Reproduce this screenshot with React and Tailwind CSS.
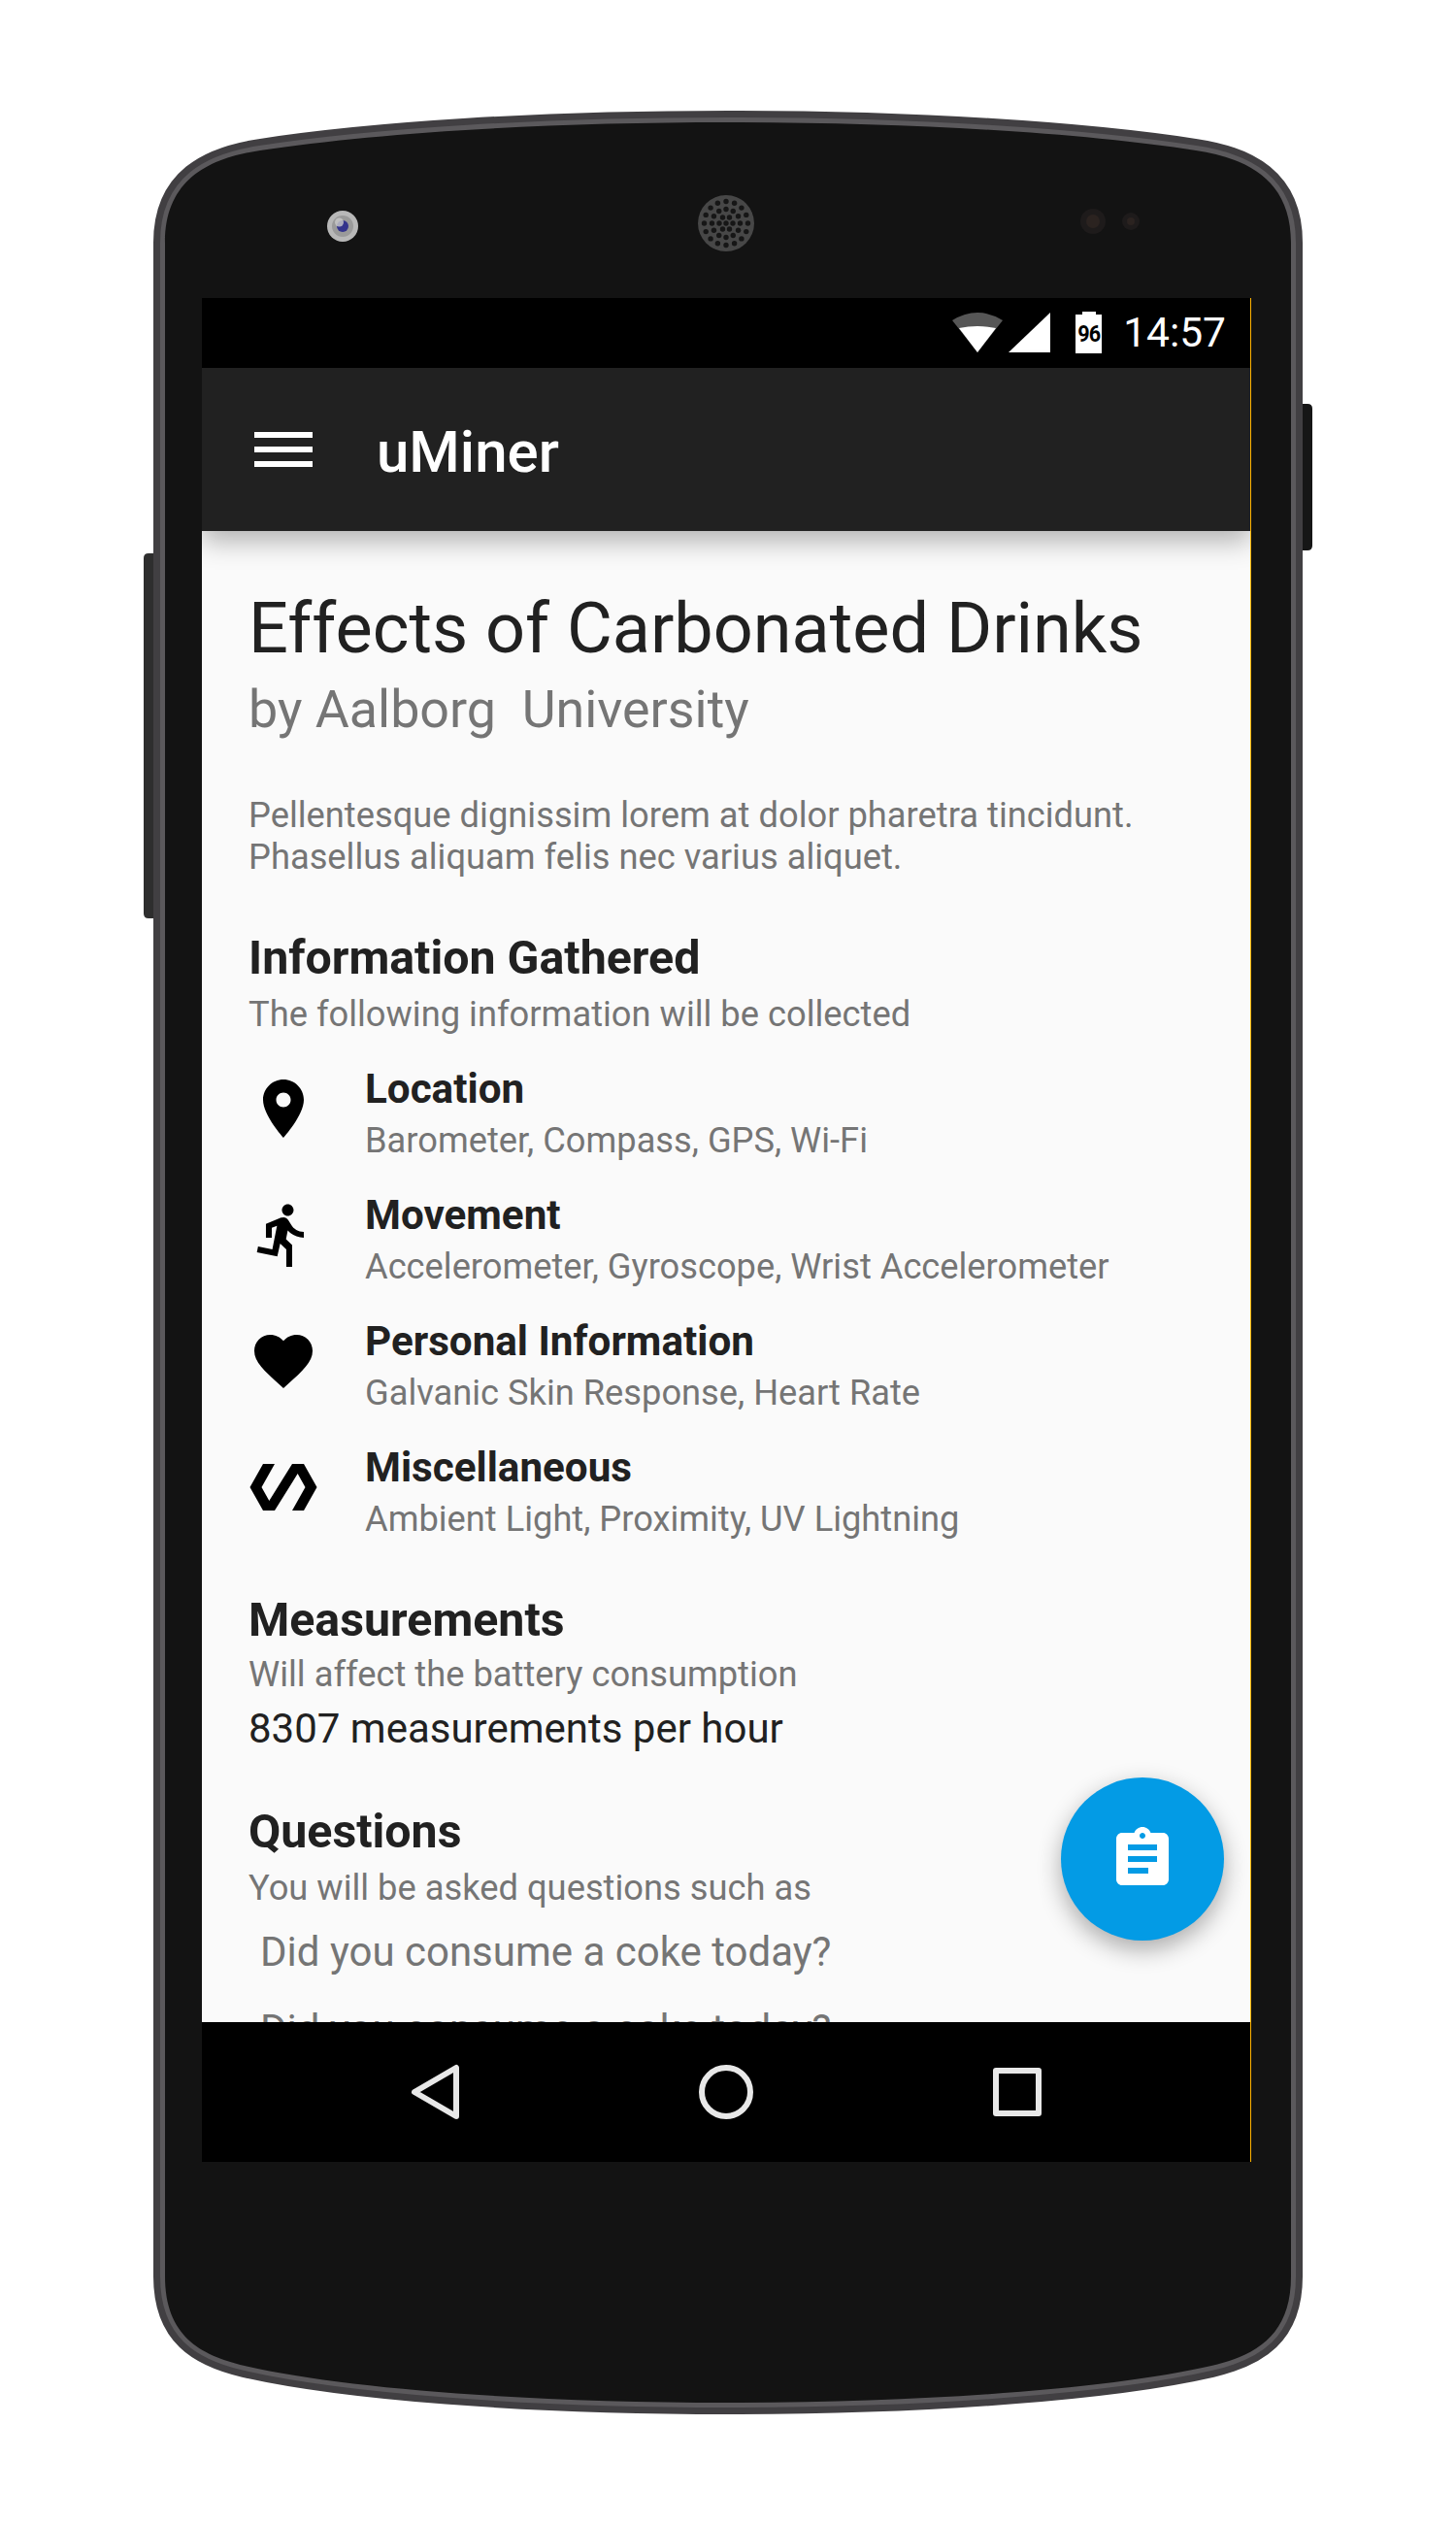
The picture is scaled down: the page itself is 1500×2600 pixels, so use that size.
import React from "react";

const BODY =
  "M750 126 C560 126 385 137 268 155 C215 163 170 185 170 250 L170 2345 C170 2405 205 2426 252 2437 C352 2460 540 2475 750 2475 C960 2475 1148 2460 1248 2437 C1295 2426 1330 2405 1330 2345 L1330 250 C1330 185 1285 163 1232 155 C1115 137 940 126 750 126 Z";

function Speaker() {
  const rings = [
    [0, 1, 0],
    [7, 6, 0],
    [14.5, 12, 0],
    [22.5, 16, 0],
  ];
  const dots = [];
  rings.forEach(([r, n, off]) => {
    for (let i = 0; i < n; i++) {
      const a = ((i * 360) / n + off) * (Math.PI / 180);
      dots.push(<circle key={`${r}-${i}`} cx={748 + r * Math.cos(a)} cy={230 + r * Math.sin(a)} r="2.7" fill="#161616" />);
    }
  });
  return (
    <g>
      <circle cx="748" cy="230" r="29" fill="#474747" />
      {dots}
    </g>
  );
}

function PhoneBody() {
  return (
    <svg className="absolute inset-0" width="1500" height="2600" viewBox="0 0 1500 2600">
      <path d="M158 570 H153 Q148 570 148 575 V941 Q148 946 153 946 H158 Z" fill="#2e2e2e" />
      <path d="M1342 416 H1347 Q1352 416 1352 421 V562 Q1352 567 1347 567 H1342 Z" fill="#161616" />
      <path d={BODY} fill="none" stroke="#413f42" strokeWidth="24" />
      <path d={BODY} fill="none" stroke="#5b595c" strokeWidth="10" />
      <path d={BODY} fill="#131313" />
      <circle cx="353" cy="233" r="16" fill="#b8b8b8" />
      <circle cx="353" cy="233" r="11" fill="#9a9a9a" />
      <circle cx="353" cy="233" r="6" fill="#33338c" />
      <circle cx="349.5" cy="229" r="4.5" fill="#c9c9c9" opacity="0.8" />
      <Speaker />
      <circle cx="1126" cy="228" r="13" fill="#1e1b1b" />
      <circle cx="1126" cy="228" r="7" fill="#2b2320" />
      <circle cx="1165" cy="228" r="9" fill="#1e1b1b" />
      <circle cx="1165" cy="228" r="4" fill="#2b2320" />
    </svg>
  );
}

function StatusBar() {
  return (
    <div className="h-[72px] bg-black flex items-start justify-end shrink-0 pr-[25px] text-white">
      <svg width="60" height="48" viewBox="0 0 60 48" className="mt-[13px]">
        <path d="M3 10 Q29 -6 55 10 L29 43 Z" fill="#565656" />
        <path d="M10 18 Q29 14 48 18 L29 43 Z" fill="#fff" />
      </svg>
      <svg width="44" height="42" viewBox="0 0 44 42" className="mt-[15px] ml-[1px]">
        <path d="M0 41 L43 0 V41 Z" fill="#fff" />
      </svg>
      <div className="relative w-[27px] h-[40px] mt-[17px] ml-[25px] bg-white flex items-center justify-center">
        <div className="absolute top-[-3px] left-[7px] w-[14px] h-[3px] bg-white" />
        <span className="text-[24px] leading-none font-bold text-black tracking-[-1px] scale-x-90">96</span>
      </div>
      <span className="text-[42.5px] leading-[72px] ml-[22px]">14:57</span>
    </div>
  );
}

function AppBar() {
  return (
    <div className="relative z-10 h-[168px] bg-[#212121] flex items-center shrink-0 shadow-[0_10px_26px_rgba(0,0,0,0.3)]">
      <div className="ml-[54px] w-[60px] flex flex-col gap-[9px]">
        <div className="h-[6px] bg-white" />
        <div className="h-[6px] bg-white" />
        <div className="h-[6px] bg-white" />
      </div>
      <span className="ml-[66px] pt-[6px] text-[60px] font-medium text-white">uMiner</span>
    </div>
  );
}

const ICONS = {
  place:
    "M12 2C8.13 2 5 5.13 5 9c0 5.25 7 13 7 13s7-7.75 7-13c0-3.87-3.13-7-7-7zm0 9.5c-1.38 0-2.5-1.12-2.5-2.5s1.12-2.5 2.5-2.5 2.5 1.12 2.5 2.5-1.12 2.5-2.5 2.5z",
  run: "M13.49 5.48c1.1 0 2-.9 2-2s-.9-2-2-2-2 .9-2 2 .9 2 2 2zm-3.6 13.9l1-4.4 2.1 2v6h2v-7.5l-2.1-2 .6-3c1.3 1.5 3.3 2.5 5.5 2.5v-2c-1.9 0-3.5-1-4.3-2.4l-1-1.6c-.4-.6-1-1-1.7-1-.3 0-.5.1-.8.1l-5.2 2.2v4.7h2v-3.4l1.8-.7-1.6 8.1-4.9-1-.4 2 7 1.4z",
  heart:
    "M12 21.35l-1.45-1.32C5.4 15.36 2 12.28 2 8.5 2 5.42 4.42 3 7.5 3c1.74 0 3.41.81 4.5 2.09C13.09 3.81 14.76 3 16.5 3 19.58 3 22 5.42 22 8.5c0 3.78-3.4 6.86-8.55 11.54L12 21.35z",
  polymer: "M19 4h-4L7.11 16.63 4.5 12 9 4H5L.5 12 5 20h4l7.89-12.63L19.5 12 15 20h4l4.5-8z",
};

function Item({ icon, title, sub }) {
  return (
    <div className="h-[130px] flex items-start">
      <svg width="72" height="72" viewBox="0 0 24 24" className="mt-[10px] shrink-0">
        <path d={ICONS[icon]} fill="#000" />
      </svg>
      <div className="ml-[48px]">
        <div className="text-[42.2px] leading-[52px] font-bold text-[#212121] whitespace-nowrap">{title}</div>
        <div className="text-[36.25px] leading-[54px] text-[#757575] whitespace-nowrap">{sub}</div>
      </div>
    </div>
  );
}

function Content() {
  return (
    <div className="relative flex-1 min-h-0 bg-[#fafafa] overflow-hidden">
      <div className="pl-[48px] pt-[58px]">
        <div className="text-[72px] leading-[86px] text-[#212121] whitespace-nowrap">Effects of Carbonated Drinks</div>
        <div className="text-[53.8px] leading-[80px] text-[#757575] whitespace-pre">by Aalborg  University</div>
        <div className="mt-[47px] text-[36.3px] leading-[43px] text-[#757575] whitespace-nowrap">
          <div>Pellentesque dignissim lorem at dolor pharetra tincidunt.</div>
          <div>Phasellus aliquam felis nec varius aliquet.</div>
        </div>
        <div className="mt-[53px] text-[48.3px] leading-[60px] font-bold text-[#212121]">Information Gathered</div>
        <div className="mt-[4px] text-[36.3px] leading-[48px] text-[#757575]">The following information will be collected</div>
        <div className="mt-[27px]">
          <Item icon="place" title="Location" sub="Barometer, Compass, GPS, Wi-Fi" />
          <Item icon="run" title="Movement" sub="Accelerometer, Gyroscope, Wrist Accelerometer" />
          <Item icon="heart" title="Personal Information" sub="Galvanic Skin Response, Heart Rate" />
          <Item icon="polymer" title="Miscellaneous" sub="Ambient Light, Proximity, UV Lightning" />
        </div>
        <div className="mt-[23px] text-[48.3px] leading-[60px] font-bold text-[#212121]">Measurements</div>
        <div className="mt-[1px] text-[36.3px] leading-[50px] text-[#757575]">Will affect the battery consumption</div>
        <div className="mt-[2px] text-[42px] leading-[58px] text-[#212121]">8307 measurements per hour</div>
        <div className="mt-[47px] text-[48.3px] leading-[60px] font-bold text-[#212121]">Questions</div>
        <div className="mt-[4px] text-[36.3px] leading-[48px] text-[#757575]">You will be asked questions such as</div>
        <div className="mt-[2px] pl-[12px] text-[42px] text-[#757575]">
          <div className="leading-[80px]">Did you consume a coke today?</div>
          <div className="leading-[80px]">Did you consume a coke today?</div>
        </div>
      </div>
      <div className="absolute right-[27px] bottom-[84px] w-[168px] h-[168px] rounded-full bg-[#039be5] flex items-center justify-center shadow-[0_9px_24px_rgba(0,0,0,0.32)]">
        <svg width="72" height="72" viewBox="0 0 24 24">
          <path
            d="M19 3h-4.18C14.4 1.84 13.3 1 12 1c-1.3 0-2.4.84-2.82 2H5c-1.1 0-2 .9-2 2v14c0 1.1.9 2 2 2h14c1.1 0 2-.9 2-2V5c0-1.1-.9-2-2-2zm-7 0c.55 0 1 .45 1 1s-.45 1-1 1-1-.45-1-1 .45-1 1-1zm2 14H7v-2h7v2zm3-4H7v-2h10v2zm0-4H7V7h10v2z"
            fill="#fff"
          />
        </svg>
      </div>
    </div>
  );
}

function NavBar() {
  return (
    <div className="relative z-10 h-[144px] bg-black grid grid-cols-3 px-[90px] shrink-0">
      <div className="flex items-center justify-center">
        <svg width="72" height="72" viewBox="0 0 72 72" fill="none" stroke="#e8e8e8" strokeWidth="6" strokeLinejoin="round">
          <path d="M58 11 V61 L15 36 Z" />
        </svg>
      </div>
      <div className="flex items-center justify-center">
        <svg width="72" height="72" viewBox="0 0 72 72" fill="none" stroke="#e8e8e8" strokeWidth="6">
          <circle cx="36" cy="36" r="25" />
        </svg>
      </div>
      <div className="flex items-center justify-center">
        <svg width="72" height="72" viewBox="0 0 72 72" fill="none" stroke="#e8e8e8" strokeWidth="6" strokeLinejoin="round">
          <rect x="14" y="14" width="44" height="44" />
        </svg>
      </div>
    </div>
  );
}

export default function App() {
  return (
    <div className="relative w-[1500px] h-[2600px] bg-white overflow-hidden font-['Roboto',sans-serif]">
      <PhoneBody />
      <div className="relative pl-[208px] pt-[307px]">
        <div className="w-[1081px] h-[1920px] border-r border-[#ffb300] flex flex-col overflow-hidden">
          <StatusBar />
          <AppBar />
          <Content />
          <NavBar />
        </div>
      </div>
    </div>
  );
}
